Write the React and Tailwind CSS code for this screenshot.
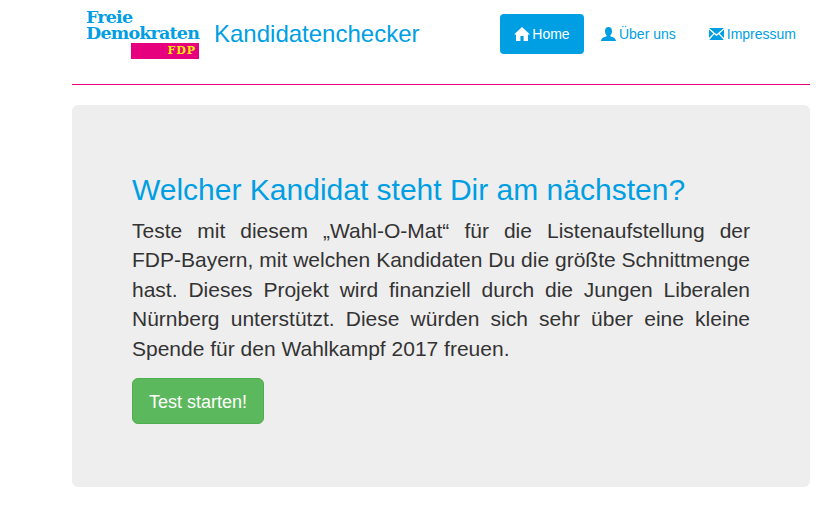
const Home = () => (
  <svg viewBox="0 0 16 14" className="w-[16px] h-[14px] fill-current mr-[2px]"><path d="M8 0 L16 7.4 L14 7.4 L14 14 L9.6 14 L9.6 9 L6.4 9 L6.4 14 L2 14 L2 7.4 L0 7.4 Z" /></svg>
);
const User = () => (
  <svg viewBox="0 0 15 14" className="w-[15px] h-[14px] fill-current mr-[3px]"><path d="M7.5 0 C10 0 11 1.8 11 4 C11 6 10.2 7.6 9.3 8.4 L9.6 9.6 C12 10.2 14.6 11 15 14 L0 14 C0.4 11 3 10.2 5.4 9.6 L5.7 8.4 C4.8 7.6 4 6 4 4 C4 1.8 5 0 7.5 0 Z" /></svg>
);
const Mail = () => (
  <svg viewBox="0 0 15 12" className="w-[15px] h-[12px] fill-current mr-[3px]"><path d="M0 0 L15 0 L7.5 6.2 Z M0 1.6 L4.4 5.4 L0 10 Z M15 1.6 L10.6 5.4 L15 10 Z M5.3 6.2 L7.5 8 L9.7 6.2 L14.8 12 L0.2 12 Z" /></svg>
);

export default function App() {
  return (
    <div className="min-h-[516px] bg-white pl-[72px] pr-[30px] font-['Liberation_Sans',Arial,sans-serif] text-[#333]">
      <header className="h-[85px] border-b border-[#e6007e] flex items-start">
        <div className="ml-[14px] mt-[9px] w-[113px] shrink-0">
          <div className="font-['DejaVu_Serif',serif] font-bold text-[#009ee3] text-[17.5px] leading-[16px] tracking-[-0.8px] whitespace-nowrap">
            <div>Freie</div>
            <div>Demokraten</div>
          </div>
          <div className="ml-[45px] mt-[2px] h-[16px] bg-[#e6007e] flex items-center justify-end pr-[3px] font-['DejaVu_Serif',serif] font-bold text-[11px] tracking-[1px] text-[#ffed00]">
            FDP
          </div>
        </div>
        <div className="ml-[15px] mt-[20px] text-[24px] leading-[28px] text-[#009fe3]">Kandidatenchecker</div>
        <nav className="ml-auto mt-[14px] flex text-[14px] leading-[20px] text-[#009fe3]">
          <a className="h-[40px] w-[84px] rounded-[4px] bg-[#009fe3] text-white flex items-center justify-center">
            <Home />Home
          </a>
          <a className="h-[40px] ml-[17px] flex items-center"><User />Über uns</a>
          <a className="h-[40px] ml-[33px] mr-[14px] flex items-center"><Mail />Impressum</a>
        </nav>
      </header>
      <main className="mt-[20px] h-[382px] rounded-[6px] bg-[#eeeeee] px-[60px] pt-[68px]">
        <h2 className="text-[30px] leading-[33px] text-[#009fe3] font-normal">Welcher Kandidat steht Dir am nächsten?</h2>
        <p className="mt-[10px] text-[21px] leading-[29.4px] text-justify font-normal">
          Teste mit diesem „Wahl-O-Mat“ für die Listenaufstellung der <span className="whitespace-nowrap">FDP-Bayern</span>, mit welchen Kandidaten Du die größte Schnittmenge hast. Dieses Projekt wird finanziell durch die Jungen Liberalen Nürnberg unterstützt. Diese würden sich sehr über eine kleine Spende für den Wahlkampf 2017 freuen.
        </p>
        <button className="mt-[15px] h-[46px] w-[132px] rounded-[6px] border border-[#4cae4c] bg-[#5cb85c] pt-[1px] text-white text-[18px] leading-[24px]">Test starten!</button>
      </main>
    </div>
  );
}
